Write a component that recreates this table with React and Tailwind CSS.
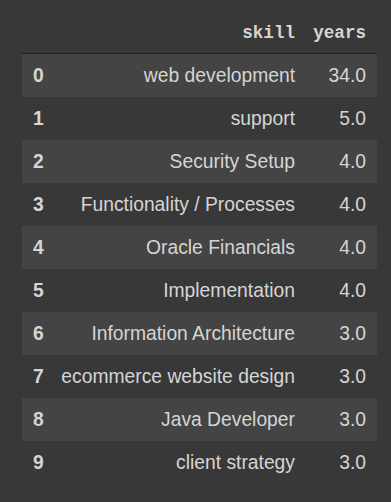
import React from "react";

const rows = [
  ["web development", "34.0"],
  ["support", "5.0"],
  ["Security Setup", "4.0"],
  ["Functionality / Processes", "4.0"],
  ["Oracle Financials", "4.0"],
  ["Implementation", "4.0"],
  ["Information Architecture", "3.0"],
  ["ecommerce website design", "3.0"],
  ["Java Developer", "3.0"],
  ["client strategy", "3.0"],
];

const App = () => {
  return (
    <div className="w-[391px] h-[502px] bg-[#383838] pt-[11px] pl-[22px] text-[#d5d5d5] font-['Liberation_Sans',Arial,sans-serif]">
      <div className="w-[355px]">
        {/* header */}
        <div className="grid grid-cols-[31px_253px_71px] h-[43px] items-center pt-[2px] border-b border-[#1f1f1f] font-['Liberation_Mono',monospace] font-bold text-[17.6px]">
          <div />
          <div className="text-right pr-[11px]">skill</div>
          <div className="text-right pr-[11px]">years</div>
        </div>

        {rows.map(([skill, years], i) => (
          <div
            key={i}
            className={`grid grid-cols-[31px_253px_71px] h-[43px] items-center pt-[1px] text-[19.3px] ${
              i % 2 === 0 ? "bg-[#444444]" : ""
            }`}
          >
            <div className="pl-[11px] font-bold">{i}</div>
            <div className="text-right pr-[11px] whitespace-nowrap">{skill}</div>
            <div className="text-right pr-[11px]">{years}</div>
          </div>
        ))}
      </div>
    </div>
  );
};

export default App;
